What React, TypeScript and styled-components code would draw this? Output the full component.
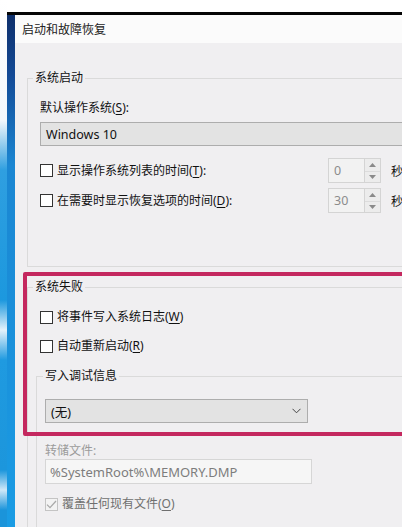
import React from "react";
import styled, { createGlobalStyle } from "styled-components";

const Global = createGlobalStyle`
  html, body { margin: 0; padding: 0; background: #ffffff; overflow: clip; }
  body { font-family: "Noto Sans", "Noto Sans CJK SC", sans-serif; }
`;

const Screen = styled.div`
  width: 402px;
  height: 527px;
  overflow: clip;
  display: flex;
  align-items: flex-start;
  background: #ffffff;
`;

const Wallpaper = styled.div`
  flex: none;
  width: 7px;
  height: 527px;
  background: linear-gradient(180deg, #ffffff 0, #f4f8fc 120px, #2f9fe0 170px, #1c98de 300px, #e4f2fb 330px, #1f9ae0 360px, #1c96dc 470px, #cfe8f8 490px, #1b94da 510px);
`;

const Frame = styled.div`
  flex: none;
  width: 440px;
  height: 512px;
  margin-top: 12px;
  border-top: 3px solid #050505;
  display: flex;
  overflow: clip;
`;

const WindowEdge = styled.div`
  flex: none;
  width: 8px;
  background: linear-gradient(180deg, #0e2f6b 0, #134a96 60px, #1a86d2 150px, #1a9ce4 100%);
`;

const Window = styled.div`
  flex: 1;
  display: flex;
  flex-direction: column;
  font-size: 12px;
  color: #111;
  overflow: clip;
`;

const TitleBar = styled.div`
  flex: none;
  height: 28px;
  display: flex;
  align-items: center;
  padding-left: 7px;
  background: #fbfbfb;
  font-size: 12px;
  color: #222;
`;

const Body = styled.div`
  position: relative;
  flex: 1;
  background: #f0eff1;
  padding: 27px 0 0 12px;
  overflow: clip;
`;

const Group = styled.fieldset<{ $inset?: number; $bottom?: number; $top?: number }>`
  margin: ${(p) => p.$top ?? 0}px 0 0 ${(p) => p.$inset ?? 0}px;
  padding: 0 0 ${(p) => p.$bottom ?? 0}px ${(p) => (p.$inset ? 6 : 5)}px;
  border: 1px solid #dadada;
  min-width: 0;
`;

const Legend = styled.legend`
  padding: 0 2px;
  line-height: 16px;
  font-size: 12px;
`;

const Content = styled.div<{ $pad: number }>`
  display: flex;
  flex-direction: column;
  padding-left: ${(p) => p.$pad}px;
`;

const Label = styled.div<{ $top: number; $muted?: boolean }>`
  margin-top: ${(p) => p.$top}px;
  line-height: 16px;
  color: ${(p) => (p.$muted ? "#9b9b9b" : "#111")};
`;

const Key = styled.span`
  text-decoration: underline;
  text-underline-offset: 2px;
`;

const Combo = styled.div<{ $top: number; $width?: number }>`
  margin-top: ${(p) => p.$top}px;
  height: 24px;
  box-sizing: border-box;
  width: ${(p) => (p.$width ? `${p.$width}px` : "auto")};
  margin-right: ${(p) => (p.$width ? 0 : 10)}px;
  display: flex;
  align-items: center;
  justify-content: space-between;
  padding: 0 6px 0 5px;
  background: #e3e3e3;
  border: 1px solid #adadad;
  color: #111;
  font-size: 12.5px;
`;

const TimeRow = styled.div<{ $top: number }>`
  margin-top: ${(p) => p.$top}px;
  display: grid;
  grid-template-columns: 278px 53px auto;
  column-gap: 10px;
  align-items: center;
  height: 25px;
`;

const CheckLine = styled.label<{ $top: number; $muted?: boolean }>`
  margin-top: ${(p) => p.$top}px;
  display: flex;
  align-items: center;
  gap: 4px;
  line-height: 16px;
  color: ${(p) => (p.$muted ? "#6f6f6f" : "#111")};
`;

const Box = styled.span<{ $muted?: boolean }>`
  flex: none;
  width: 13px;
  height: 13px;
  box-sizing: border-box;
  border: 1px solid ${(p) => (p.$muted ? "#c4c4c4" : "#333")};
  background: ${(p) => (p.$muted ? "#f3f3f3" : "#fff")};
  display: flex;
  align-items: center;
  justify-content: center;
`;

const Spinner = styled.div`
  height: 25px;
  box-sizing: border-box;
  border: 1px solid #d4d4d4;
  background: #f2f2f2;
  display: grid;
  grid-template-columns: 1fr 16px;
`;

const SpinValue = styled.div`
  display: flex;
  align-items: center;
  padding-left: 5px;
  color: #8c8c8c;
  font-size: 12.5px;
`;

const SpinButtons = styled.div`
  border-left: 1px solid #d4d4d4;
  display: grid;
  grid-template-rows: 1fr 1fr;
  background: #ececec;
`;

const SpinButton = styled.div`
  display: flex;
  align-items: center;
  justify-content: center;
  & + & { border-top: 1px solid #dcdcdc; }
`;

const Unit = styled.span`
  color: #111;
`;

const TextField = styled.div`
  width: 267px;
  height: 25px;
  box-sizing: border-box;
  border: 1px solid #d6d6d6;
  background: #f6f6f6;
  display: flex;
  align-items: center;
  padding-left: 4px;
  color: #7d7d7d;
  font-size: 13px;
`;

const Highlight = styled.div`
  position: absolute;
  left: 8px;
  top: 229px;
  width: 520px;
  height: 164px;
  box-sizing: border-box;
  border: 4px solid #c4285f;
  border-radius: 2px;
  pointer-events: none;
`;

const Arrow = ({ up }: { up?: boolean }) => (
  <svg width="7" height="4" viewBox="0 0 7 4">
    <path d={up ? "M0 4 L3.5 0 L7 4 Z" : "M0 0 L3.5 4 L7 0 Z"} fill="#8a8a8a" />
  </svg>
);

const Chevron = () => (
  <svg width="9" height="6" viewBox="0 0 9 6">
    <path d="M0.5 0.8 L4.5 4.8 L8.5 0.8" fill="none" stroke="#444" strokeWidth="1" />
  </svg>
);

const Tick = () => (
  <svg width="11" height="9" viewBox="0 0 11 9">
    <path d="M1 4.6 L4 7.6 L10 1" fill="none" stroke="#a9a9a9" strokeWidth="1.3" />
  </svg>
);

const Check = ({
  top,
  muted,
  checked,
  children,
}: {
  top: number;
  muted?: boolean;
  checked?: boolean;
  children: React.ReactNode;
}) => (
  <CheckLine $top={top} $muted={muted}>
    <Box $muted={muted}>{checked && <Tick />}</Box>
    <span>{children}</span>
  </CheckLine>
);

const TimeSetting = ({
  top,
  label,
  value,
}: {
  top: number;
  label: React.ReactNode;
  value: string;
}) => (
  <TimeRow $top={top}>
    <Check top={0}>{label}</Check>
    <Spinner>
      <SpinValue>{value}</SpinValue>
      <SpinButtons>
        <SpinButton>
          <Arrow up />
        </SpinButton>
        <SpinButton>
          <Arrow />
        </SpinButton>
      </SpinButtons>
    </Spinner>
    <Unit>秒</Unit>
  </TimeRow>
);

export default function App() {
  return (
    <>
      <Global />
      <Screen>
        <Wallpaper />
        <Frame>
          <WindowEdge />
          <Window>
            <TitleBar>启动和故障恢复</TitleBar>
            <Body>
              <Group $bottom={53}>
                <Legend>系统启动</Legend>
                <Content $pad={7}>
                  <Label $top={14}>
                    默认操作系统(<Key>S</Key>):
                  </Label>
                  <Combo $top={6}>Windows 10</Combo>
                  <TimeSetting
                    top={12}
                    value="0"
                    label={
                      <>
                        显示操作系统列表的时间(<Key>T</Key>):
                      </>
                    }
                  />
                  <TimeSetting
                    top={5}
                    value="30"
                    label={
                      <>
                        在需要时显示恢复选项的时间(<Key>D</Key>):
                      </>
                    }
                  />
                </Content>
              </Group>
              <Group $bottom={40} $top={12}>
                <Legend>系统失败</Legend>
                <Content $pad={7}>
                  <Check top={14}>
                    将事件写入系统日志(<Key>W</Key>)
                  </Check>
                  <Check top={13}>
                    自动重新启动(<Key>R</Key>)
                  </Check>
                  <Group $inset={-4} $bottom={40} $top={14}>
                    <Legend>写入调试信息</Legend>
                    <Content $pad={2}>
                      <Combo $top={15} $width={263}>
                        <span>(无)</span>
                        <Chevron />
                      </Combo>
                      <Label $top={20} $muted>
                        转储文件:
                      </Label>
                      <TextField>%SystemRoot%\MEMORY.DMP</TextField>
                      <Check top={12} muted checked>
                        覆盖任何现有文件(<Key>O</Key>)
                      </Check>
                    </Content>
                  </Group>
                </Content>
              </Group>
              <Highlight />
            </Body>
          </Window>
        </Frame>
      </Screen>
    </>
  );
}
